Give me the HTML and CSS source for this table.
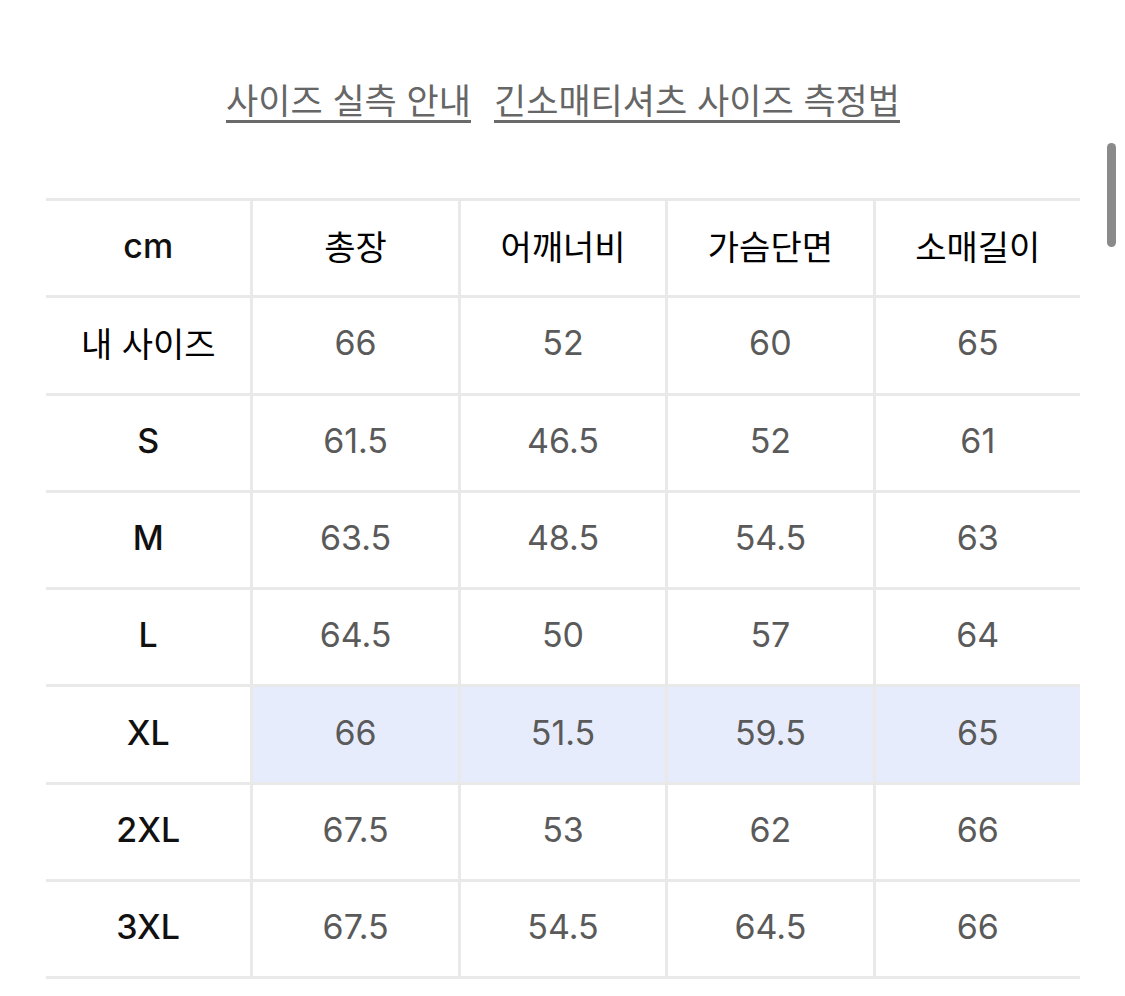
FILE: index.html
```html
<!DOCTYPE html>
<html lang="ko">
<head>
<meta charset="utf-8">
<link rel="stylesheet" href="styles.css">
</head>
<body>
<div class="page">
  <nav class="links">
    <a class="link" href="#">사이즈 실측 안내</a>
    <a class="link" href="#">긴소매티셔츠 사이즈 측정법</a>
  </nav>
  <div class="table">
    <div class="cell head">cm</div>
    <div class="cell head ko">총장</div>
    <div class="cell head ko">어깨너비</div>
    <div class="cell head ko">가슴단면</div>
    <div class="cell head ko">소매길이</div>

    <div class="cell head ko">내 사이즈</div>
    <div class="cell">66</div><div class="cell">52</div><div class="cell">60</div><div class="cell">65</div>

    <div class="cell head">S</div>
    <div class="cell">61.5</div><div class="cell">46.5</div><div class="cell">52</div><div class="cell">61</div>

    <div class="cell head">M</div>
    <div class="cell">63.5</div><div class="cell">48.5</div><div class="cell">54.5</div><div class="cell">63</div>

    <div class="cell head">L</div>
    <div class="cell">64.5</div><div class="cell">50</div><div class="cell">57</div><div class="cell">64</div>

    <div class="cell head">XL</div>
    <div class="cell hl">66</div><div class="cell hl">51.5</div><div class="cell hl">59.5</div><div class="cell hl">65</div>

    <div class="cell head">2XL</div>
    <div class="cell">67.5</div><div class="cell">53</div><div class="cell">62</div><div class="cell">66</div>

    <div class="cell head">3XL</div>
    <div class="cell">67.5</div><div class="cell">54.5</div><div class="cell">64.5</div><div class="cell">66</div>
  </div>
</div>
<div class="scrollbar"></div>
</body>
</html>
```

FILE: styles.css
```css
html, body {
  margin: 0;
  padding: 0;
  background: #ffffff;
}
body {
  font-family: Inter, "Noto Sans CJK KR", sans-serif;
  width: 1125px;
  height: 996px;
  overflow: hidden;
  position: relative;
}
.page {
  padding: 78px 45px 0 46px;
}
.links {
  display: flex;
  justify-content: center;
  gap: 23px;
  height: 120px;
}
.link {
  display: inline-block;
  height: 42px;
  font-family: "Noto Sans CJK KR", sans-serif;
  font-size: 35px;
  line-height: 42px;
  color: #666666;
  text-decoration: none;
  border-bottom: 3px solid #6a6a6a;
}
.table {
  display: grid;
  grid-template-columns: repeat(5, 1fr);
  grid-auto-rows: 94.3px;
  gap: 3px;
  padding: 3px 0;
  background: #e9e9e9;
  width: 1034px;
}
.cell {
  background: #ffffff;
  display: flex;
  align-items: center;
  justify-content: center;
  padding-bottom: 5px;
  box-sizing: border-box;
  font-size: 34px;
  color: #5a5a5a;
}
.cell.head {
  color: #111111;
  font-size: 34px;
  font-weight: 500;
}
.cell.head.ko {
  font-family: "Noto Sans CJK KR", sans-serif;
  font-weight: 400;
  color: #000000;
}
.cell.hl {
  background: #e7ecfc;
}
.scrollbar {
  position: absolute;
  left: 1107px;
  top: 143px;
  width: 9px;
  height: 104px;
  border-radius: 5px;
  background: #8a8a8a;
}
```
